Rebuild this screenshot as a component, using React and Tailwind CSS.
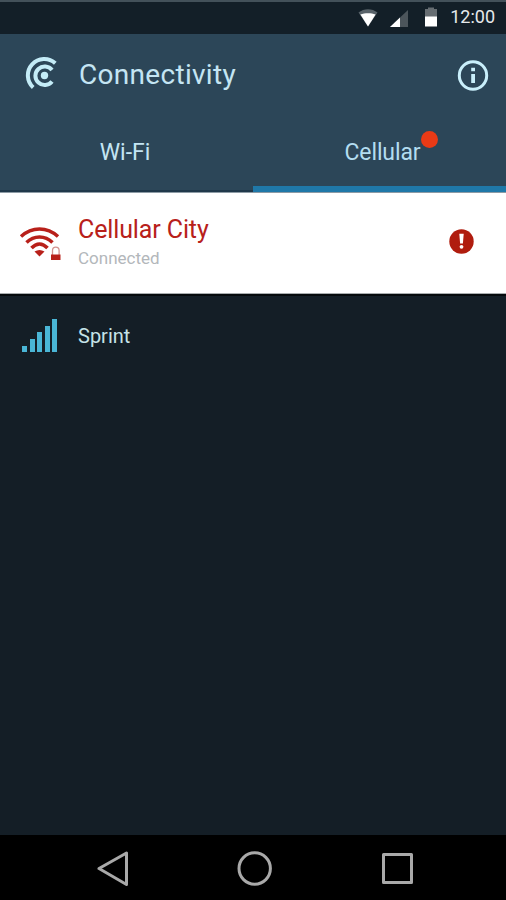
const networks = [{ name: 'Sprint', bars: [6, 13, 20, 26, 33] }];

function StatusBar() {
  return (
    <div className="flex h-[34px] shrink-0 items-start justify-end border-t-2 border-[#43515a] bg-[#131f28] pr-[11px]">
      {/* wifi */}
      <svg className="mt-[6px] mr-[12px] h-5 w-5" viewBox="0 0 20 20">
        <path d="M0.5 4.5C6 0 14 0 19.5 4.5L10 18.500Z" fill="#59636a" />
        <path d="M2.4 6.500C7 4.800 13 4.800 17.6 6.500L10 18.500Z" fill="#fff" />
      </svg>
      {/* signal */}
      <svg className="mt-[7px] mr-[16px] h-5 w-[18px]" viewBox="0 0 18 20">
        <path d="M0 18L18 1V18Z" fill="#4c555b" />
        <path d="M0 18L10 8.5V18Z" fill="#fff" />
      </svg>
      {/* battery */}
      <svg className="mt-[5px] mr-[12px] h-5 w-[14px]" viewBox="0 0 14 20">
        <path d="M1 2H4V0.500H10V2H13V10H1Z" fill="#666d72" />
        <path d="M1 9.500H13V19.500H1Z" fill="#fff" />
      </svg>
      <span className="mt-[3px] text-[18px] leading-6 text-[#e6e9eb]">12:00</span>
    </div>
  );
}

function Logo() {
  return (
    <svg className="h-9 w-9" viewBox="0 0 36 36" fill="none" stroke="#c4ecf7" strokeWidth="4">
      <path d="M33.300 6.300A16.200 16.200 0 0 0 11.200 30.500" />
      <path d="M30 13A9.300 9.300 0 1 0 30 24.500" />
      <circle cx="22.500" cy="18.500" r="3.700" fill="#c4ecf7" stroke="none" />
    </svg>
  );
}

function SecureWifi() {
  return (
    <svg className="h-10 w-12" viewBox="0 0 48 40" fill="none" stroke="#b8201a" strokeWidth="3.500">
      <path d="M2 14.500C13 4.500 28 4.500 39 14.500" />
      <path d="M7.500 20.500C15 13 26 13 33.500 20.500" />
      <path d="M12.500 26C17.500 20.500 23.500 20.500 28.500 26" />
      <path d="M15.500 29.500Q20.500 26.500 25.500 29.500L20.500 34.500Z" fill="#b8201a" stroke="none" />
      <path d="M33.500 33V28.500a3.300 3.300 0 0 1 6.600 0V33" stroke="#d3938f" strokeWidth="1.300" />
      <path d="M32 32.500H41.500V38H32Z" fill="#b8201a" stroke="none" />
    </svg>
  );
}

function Header() {
  return (
    <header className="h-[159px] shrink-0 border-b border-[#8d9ba5] bg-[#2c4658] text-[#c4e5f3]">
      <div className="flex h-[82px] items-center pl-[22px] pr-[17px]">
        <Logo />
        <h1 className="ml-[21px] flex-1 text-[28px] leading-8 tracking-[0.300px]">Connectivity</h1>
        <svg className="h-8 w-8" viewBox="0 0 32 32">
          <circle cx="16" cy="16.500" r="13.700" fill="none" stroke="#c9effb" strokeWidth="3" />
          <path d="M14.200 8.800H18V12.300H14.200ZM14.200 15H18V24H14.200Z" fill="#c9effb" />
        </svg>
      </div>
      <div className="grid h-[76px] grid-cols-2 text-[23px]">
        <div className="flex justify-center border-b-2 border-[#20384a] pt-[21px] pr-[3px] leading-8">Wi-Fi</div>
        <div className="flex justify-center border-b-[6px] border-[#1f78a8] pt-[21px] pl-[6px] leading-8">
          <span className="relative h-8 tracking-[-0.100px] text-[#b3ddf0]">
            Cellular
            <i className="absolute -top-[6px] left-full h-[17px] w-[17px] rounded-full bg-[#e93a16]" />
          </span>
        </div>
      </div>
    </header>
  );
}

function ConnectedCard() {
  return (
    <section className="flex h-[101px] shrink-0 border-b border-[#a9adaf] bg-white">
      <div className="w-[78px] pt-[29px] pl-[19px]">
        <SecureWifi />
      </div>
      <div className="flex-1 pt-[21px]">
        <p className="text-[25px] leading-8 tracking-[-0.120px] text-[#b8201a]">Cellular City</p>
        <p className="text-[17px] leading-6 text-[#b3b7bb]">Connected</p>
      </div>
      <svg className="mt-[36px] mr-[32px] h-[25px] w-[25px]" viewBox="0 0 25 25">
        <circle cx="12.500" cy="12.500" r="12.200" fill="#b01c0e" />
        <path d="M10.300 4.800H14.700L13.900 14.500H11.100Z" fill="#fff" />
        <circle cx="12.500" cy="17.800" r="1.900" fill="#fff" />
      </svg>
    </section>
  );
}

function NavBar() {
  return (
    <nav className="flex h-[65px] shrink-0 items-center bg-black pt-[3px] pl-[96px]">
      <svg className="h-9 w-[34px]" viewBox="0 0 34 36" fill="none" stroke="#a9a9a9" strokeWidth="3" strokeLinejoin="round">
        <path d="M3 17.500L30.500 2V33.500Z" />
      </svg>
      <svg className="ml-[107px] h-9 w-9" viewBox="0 0 36 36" fill="none" stroke="#a9a9a9" strokeWidth="3">
        <circle cx="17.700" cy="17.500" r="15.700" />
      </svg>
      <svg className="ml-[107px] h-9 w-9" viewBox="0 0 36 36" fill="none" stroke="#a9a9a9" strokeWidth="3" strokeLinejoin="round">
        <path d="M3.500 3.500H31.500V31.500H3.500Z" />
      </svg>
    </nav>
  );
}

export default function App() {
  return (
    <div className="flex h-screen w-full flex-col overflow-hidden bg-[#141e26] font-['Roboto',sans-serif]">
      <StatusBar />
      <Header />
      <ConnectedCard />
      <main className="flex-1 border-t-2 border-[#060a0d] pt-[21px]">
        {networks.map((n) => (
          <div key={n.name} className="flex h-9 items-center pl-[22px]">
            <div className="flex h-[33px] w-[56px] items-end gap-[2.500px]">
              {n.bars.map((h) => (
                <span key={h} className="w-[5px] bg-[#4ab6d6]" style={{ height: h }} />
              ))}
            </div>
            <span className="pt-px text-[20px] leading-6 text-[#c5e3e8]">{n.name}</span>
          </div>
        ))}
      </main>
      <NavBar />
    </div>
  );
}
